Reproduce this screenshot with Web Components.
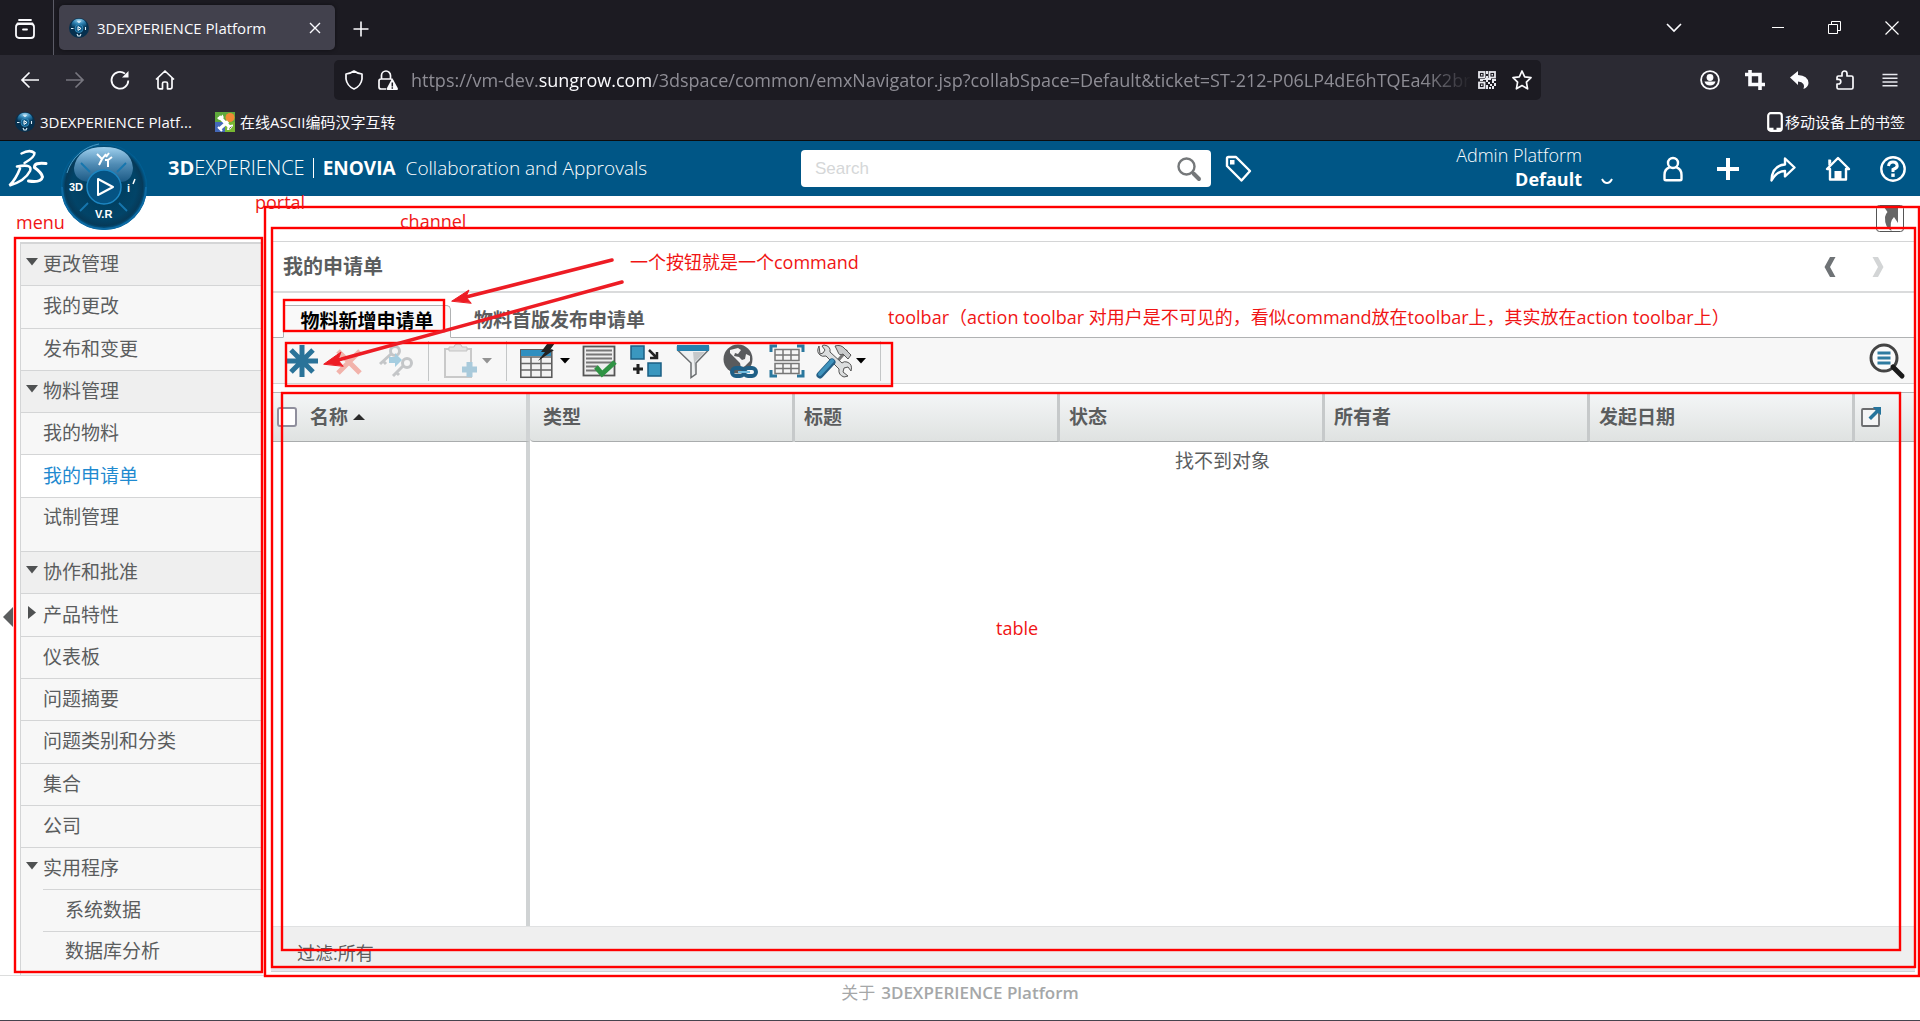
<!DOCTYPE html>
<html lang="zh-CN">
<head>
<meta charset="utf-8">
<title>3DEXPERIENCE Platform</title>
<style>
html,body{margin:0;height:100%}
body{font-family:"Open Sans","Noto Sans CJK SC",sans-serif;font-size:15px;color:#5b5d5e;background:#fff;overflow:hidden}
</style>
</head>
<body>
<app-shell></app-shell>
<script>
const define=(name,markup,setup)=>{
  customElements.define(name,class extends HTMLElement{
    constructor(){
      super();
      const t=document.createElement('template');
      t.innerHTML='<style>*{box-sizing:border-box}button{font:inherit;color:inherit;background:none;border:0;padding:0;margin:0;display:inline-flex;align-items:center;justify-content:center}a{color:inherit;text-decoration:none}</style>'+markup;
      this.attachShadow({mode:'open'}).append(t.content.cloneNode(true));
    }
    connectedCallback(){ if(setup) setup(this,this.shadowRoot); }
  });
};

const globeBall=`<defs><radialGradient id="b" cx=".5" cy=".2" r=".8"><stop offset="0" stop-color="#9fd4ee"/><stop offset=".5" stop-color="#2b7fb0"/><stop offset="1" stop-color="#0c4266"/></radialGradient></defs>
<circle cx="10" cy="10" r="10" fill="#06304e"/><path d="M2.500 6Q4 .8 10 .8T17.500 6Q18 10 14 9.500L10 7 6 9.500Q2 10 2.500 6z" fill="url(#b)"/><circle cx="10" cy="10.500" r="4" fill="#0f5a88" stroke="#3f97c6" stroke-width=".8"/><path d="M9 8.600l3 1.900-3 1.900z" fill="none" stroke="#fff"/><path d="M2 10.500h2.500M16.500 9v3M8 16l1 2h2l1-2M8.500 3l1.500 1.500L11.500 3" stroke="#dff1fb" stroke-width="1.100" fill="none"/>`;

/* name: [width, height, body] */
const ICONS={
 view:[20,20,'<g fill="none" stroke="#fbfbfe" stroke-width="1.800" stroke-linecap="round"><path d="M4 1h12M2.500 4.500h15"/><rect x="1" y="5" width="18" height="14" rx="3"/><path d="M8 10.500h4"/></g>'],
 ball:[20,20,globeBall],
 x:[12,12,'<path d="M1 1l10 10M11 1L1 11" stroke="#fbfbfe" stroke-width="1.400"/>'],
 plus:[16,16,'<path d="M8 0.500v15M.5 8h15" stroke="#fbfbfe" stroke-width="1.600"/>'],
 down:[16,10,'<path d="M1 1l7 7 7-7" fill="none" stroke="#fbfbfe" stroke-width="1.600"/>'],
 min:[12,12,'<path d="M0 5.500h12" stroke="#fff" stroke-width="1"/>'],
 restore:[13,13,'<path d="M.5 3.500h9v9h-9zM3.500 3.500v-3h9v9h-3" fill="none" stroke="#fff"/>'],
 close:[14,14,'<path d="M.5.5l13 13M13.500.5l-13 13" stroke="#fff" stroke-width="1.200"/>'],
 back:[20,18,'<path d="M19 9H2M9.500 1.500L2 9l7.500 7.500" fill="none" stroke="#fbfbfe" stroke-width="1.700"/>'],
 fwd:[20,18,'<path d="M1 9h17M10.500 1.500L18 9l-7.500 7.500" fill="none" stroke="#77767f" stroke-width="1.700"/>'],
 reload:[20,20,'<path d="M18.300 10.500A8.400 8.400 0 1 1 15 3.600" fill="none" stroke="#fbfbfe" stroke-width="1.800"/><path d="M18.500 1v6.500H12z" fill="#fbfbfe"/>'],
 house:[20,20,'<path d="M1 9.500L10 1l9 8.500M3 8v9q0 1.800 1.800 1.800H7.500V13.500Q7.500 12 9 12h2q1.500 0 1.500 1.500v5.300h2.700Q17 18.800 17 17V8" fill="none" stroke="#fbfbfe" stroke-width="1.700" stroke-linejoin="round"/>'],
 shield:[18,20,'<path d="M9 1q4 2.800 8 3v5q-1 7-8 10Q2 16 1 9V4q4-.2 8-3z" fill="none" stroke="#fbfbfe" stroke-width="1.700" stroke-linejoin="round"/>'],
 lock:[20,20,'<path d="M3.500 9V5.500a4.500 4.500 0 0 1 9 0V9M8 19H3q-2 0-2-2v-6q0-2 2-2h10q1 0 1.500.6" fill="none" stroke="#fbfbfe" stroke-width="1.700"/><path d="M13.500 9.500q.8-1 1.600 0L20 18.500q0 1.500-1 1.500H9.500q-1.200 0-.8-1.500z" fill="#fbfbfe"/><path d="M14.300 12.500v4M14.300 17.300v1.400" stroke="#1c1b22" stroke-width="1.500"/>'],
 qr:[18,18,'<g fill="none" stroke="#e8e8ee" stroke-width="1.800"><rect x="1" y="1" width="5.500" height="5.500"/><rect x="11.500" y="1" width="5.500" height="5.500"/><rect x="1" y="11.500" width="5.500" height="5.500"/></g><path d="M3 3h1.500v1.500H3zM13.500 3H15v1.500h-1.500zM3 13.500h1.500V15H3zM8 0h2v3H8zM8 5h2v2h3v2h-3v2H8V9H5v1H2V8h5V7h1zM14 8h4v2h-2v2h-2zM10 11h2v2h-2zM12 13h2v2h-2zM14 15h2v3h-2zM16 12h2v3h-2zM8 14h2v4H8zM11 16h2v2h-2z" fill="#e8e8ee"/>'],
 star:[20,20,'<path d="M10 1l2.700 5.800 6.300.9-4.600 4.500 1.200 6.600L10 15.600 4.400 18.800l1.200-6.600L1 7.700l6.300-.9z" fill="none" stroke="#fbfbfe" stroke-width="1.700" stroke-linejoin="round"/>'],
 account:[20,20,'<circle cx="10" cy="10" r="8.900" fill="none" stroke="#fbfbfe" stroke-width="1.800"/><circle cx="10" cy="7.500" r="3.400" fill="#fbfbfe"/><path d="M4.500 11.500h11q-1 4-5.500 4t-5.500-4z" fill="#fbfbfe"/>'],
 crop:[20,20,'<path d="M5 0v14.500h15M0 4.500h15V20" fill="none" stroke="#fbfbfe" stroke-width="3.600"/>'],
 undo:[19,18,'<path d="M0 6.500L8 0v4q10 .5 10.500 8-.2 4-5 6 2.500-6.500-5.500-7.500V14z" fill="#fbfbfe"/>'],
 puzzle:[18,20,'<path d="M6 5V3.500a2.500 2.500 0 0 1 5 0V6h4.500q1.500 0 1.500 1.500v10q0 1.500-1.500 1.500h-13Q1 19 1 17.500V14h1.500a2.300 2.300 0 0 0 0-4.600H1V7.500Q1 6 2.500 6H6z" fill="none" stroke="#fbfbfe" stroke-width="1.700" stroke-linejoin="round"/>'],
 lines:[16,14,'<path d="M.5 1.500h15M.5 5.200h15M.5 9h15M.5 12.700h15" stroke="#e8e8ee" stroke-width="1.400"/>'],
 tools2:[20,20,'<rect width="20" height="20" fill="#5fa83b"/><path d="M0 10h10v10H0z" fill="#4468b8"/><path d="M10 10h10v10H10z" fill="#78b832"/><circle cx="15" cy="5.500" r="4.500" fill="#f08a34"/><path d="M4 4.500l12 12M13 9.500L4.500 17" stroke="#fff" stroke-width="3.200"/><path d="M2 6q2 3 5 1.500T7.500 2.500L5.500 5 4 4.800z" fill="#fff"/><path d="M13 18q0-4 5-4.500M3 15l4 4" stroke="#fff" stroke-width="2"/>'],
 phone:[16,20,'<rect x="1.200" y="1.200" width="13.600" height="17.600" rx="2.500" fill="none" stroke="#fff" stroke-width="2.200"/><path d="M2 17h4.500M9.500 17H14" stroke="#fff" stroke-width="2.500"/>'],
 ds:[40,40,'<g fill="none" stroke="#fff" stroke-linecap="round"><path d="M13.500 4.500Q22 0 26.500 4 27 8 16.500 14" stroke-width="2.500"/><path d="M9 17.500Q25 14.500 22 22 17 32 1.500 36.500 8 30 12 19.500" stroke-width="2.600"/><path d="M38 14.500Q26 13 26.500 18.500 34 24 34.500 28 33 34 20.500 32" stroke-width="3"/></g>'],
 compass:[90,90,`<defs><radialGradient id="a" cx=".5" cy=".5" r=".5"><stop offset="0" stop-color="#003a58"/><stop offset=".75" stop-color="#024468"/><stop offset=".9" stop-color="#063a59"/><stop offset="1" stop-color="#00639a"/></radialGradient><linearGradient id="c" x1="0" y1="0" x2="0" y2="1"><stop offset="0" stop-color="#9fd0ee"/><stop offset=".5" stop-color="#4f8bb4"/><stop offset="1" stop-color="#1c5a85"/></linearGradient></defs>
 <circle cx="45" cy="45" r="43" fill="url(#a)"/><path d="M8 31A41 41 0 0 1 40 2" fill="none" stroke="#4b9ac4"/><path d="M3 45a42 42 0 0 0 84 0" fill="none" stroke="#0d6aa3" stroke-width="2"/>
 <path d="M15 26Q18 5 45 5t29 21q-1 14-13 14-6-12-16-12T29 40Q15 38 15 26z" fill="url(#c)"/>
 <path d="M22 21l9 9M67 21l-9 9M21 69l8-8M68 69l-8-8" stroke="#1676ae" stroke-width="1.800"/>
 <circle cx="45" cy="45" r="17" fill="#055383" stroke="#1d86c2" stroke-width="1.500"/><path d="M39 37l15 8-15 8z" fill="none" stroke="#fff" stroke-width="2" stroke-linejoin="round"/>
 <path d="M38 12l5 5 4-5M43 17l-3 6M46 18h4M49 18v7M53 15l-4 3M50 11l-3 4" stroke="#fff" stroke-width="2" fill="none"/>
 <g fill="#fff" font-family="Liberation Sans" font-weight="700" font-size="11"><text x="10" y="49">3D</text><text x="36" y="76">V.R</text><text x="68" y="50">i</text></g><path d="M74 42l2-5" stroke="#fff" stroke-width="1.500"/>`],
 find:[24,24,'<circle cx="9.500" cy="9.500" r="8" fill="none" stroke="#75787a" stroke-width="2.400"/><path d="M15 15l2 2" stroke="#75787a" stroke-width="2"/><path d="M16.500 16.500l5.500 5.500" stroke="#75787a" stroke-width="4" stroke-linecap="round"/>'],
 tag:[28,28,'<path d="M2 3.500Q2 2 3.500 2H11l14 14-8.500 9.500L2 11z" fill="none" stroke="#fff" stroke-width="2.400" stroke-linejoin="round"/><rect x="5" y="5" width="4.500" height="4.500" fill="#fff"/>'],
 user:[26,26,'<circle cx="13" cy="7" r="5" fill="none" stroke="#fff" stroke-width="2.400"/><path d="M9.500 11.500Q4.500 13 4.500 19v4q0 1.300 1.500 1.300h14q1.500 0 1.500-1.300v-4q0-6-5-7.500" fill="none" stroke="#fff" stroke-width="2.400"/>'],
 add:[26,26,'<path d="M13 2v22M2 13h22" stroke="#fff" stroke-width="4"/>'],
 share:[26,26,'<path d="M1.500 24.500Q2 9.500 15 8.500V2.500l9.500 9-9.500 9v-5.500Q7 15 1.500 24.500z" fill="none" stroke="#fff" stroke-width="2.400" stroke-linejoin="round"/>'],
 home:[26,26,'<path d="M13 2L2 13h3v10.500h16V13h3zM5 7V4" fill="none" stroke="#fff" stroke-width="2.400" stroke-linejoin="round"/><rect x="9.500" y="15" width="7" height="9" fill="#fff"/><path d="M4.500 3.500v6" stroke="#fff" stroke-width="2.400"/>'],
 help:[26,26,'<circle cx="13" cy="13" r="11.700" fill="none" stroke="#fff" stroke-width="2.400"/><path d="M8.500 10Q9 6 13 6t4.200 4Q17 12 13 13.500V16" fill="none" stroke="#fff" stroke-width="3"/><rect x="11.300" y="17.500" width="3.400" height="3.400" fill="#fff"/>'],
 caret:[12,7,'<path d="M1 1q2 4 5 4t5-4" fill="none" stroke="#fff" stroke-width="2"/>'],
 pin:[30,28,'<rect x="1.500" y=".5" width="27" height="26" rx="3" fill="#fff" stroke="#555"/><path d="M9 2h14v16l-4-6q-5 5-2.500 14-7-4-6.500-14 .5-3 2.500-5z" fill="#666"/>'],
 prev:[12,20,'<path d="M6 0h5.500L6 10l5.500 10H6L.5 10z" fill="#6f7376"/>'],
 next:[12,20,'<path d="M6 0H.5L6 10 .5 20H6l5.500-10z" fill="#d3d5d6"/>'],
 tri:[12,8,'<path d="M0 0h12L6 7.500z" fill="#4f5152"/>'],
 trir:[8,13,'<path d="M0 0v13l8-6.500z" fill="#4f5152"/>'],
 dd:[10,6,'<path d="M0 0h10L5 5.500z" fill="#000"/>'],
 up:[12,7,'<path d="M6 0l6 6H0z" fill="#2b2b2b"/>'],
 aster:[34,34,'<path d="M17 1v32M1 17h32M6 6l22 22M28 6L6 28" stroke="#2a7399" stroke-width="5"/>'],
 del:[34,34,'<path d="M6 7l22 22M28 7L6 29" stroke="#f2b3ab" stroke-width="5"/>'],
 keys:[34,34,'<g fill="none" stroke="#c4c6c8" stroke-width="3"><circle cx="16" cy="7" r="4.500"/><path d="M12 10L1 20M4 17l3 3"/><circle cx="28" cy="19" r="4.500"/><path d="M24 22L14 32M17 28l3 3"/></g><path d="M10 13h6V9l7 7-7 7v-4h-6z" fill="#a5cde0"/>'],
 paste:[34,34,'<path d="M2 5h26v28H2z" fill="#f4f4f4" stroke="#c9c9c9" stroke-width="2"/><path d="M6 7V3h5q0-3 4-3t4 3h5v4z" fill="#e2e2e2" stroke="#c3c3c3"/><path d="M26.500 18v15M19 25.500h15" stroke="#a9cadb" stroke-width="6"/>'],
 table:[36,34,'<rect x=".8" y="5.800" width="31" height="27.500" fill="#f2f2f2" stroke="#555" stroke-width="1.500"/><path d="M1 6h30v6H1z" fill="#2f8fc0"/><path d="M1 13h30M1 19.500h30M1 26h30M11 13v20M21 13v20" stroke="#666" stroke-width="1.500"/><path d="M27 0l8-1-5 7h4L18 17l7-9h-4z" fill="#222"/>'],
 list:[34,34,'<rect x="1.500" y="2.500" width="31" height="29" fill="#eee" stroke="#555" stroke-width="1.800"/><path d="M4 6.500h26M4 10.500h26M4 14.500h26M4 18.500h26M4 22.500h12M4 26.500h11" stroke="#777" stroke-width="2"/><path d="M14 23l6 7L33 18" fill="none" stroke="#2f9344" stroke-width="5"/>'],
 swap:[34,34,'<g fill="#3a97bf" stroke="#1b5f84" stroke-width="1.500"><rect x="2" y="2" width="13" height="13"/><rect x="19" y="19" width="13" height="13"/></g><path d="M20 6l7 7M28 8v6h-7" fill="none" stroke="#222" stroke-width="2.500"/><path d="M9 20v10M4 25h10" stroke="#222" stroke-width="3"/>'],
 funnel:[34,34,'<path d="M1.500 3h31v3L20 19v11l-5 3.500V19L1.500 6z" fill="#eef0f1" stroke="#6b6e70" stroke-width="1.500"/><path d="M1 1h32v6H1z" fill="#2480ad"/><path d="M17 8h12l-10 10v11" fill="#c5c8ca"/>'],
 globe:[36,34,'<circle cx="16" cy="15" r="14.500" fill="#595b5d"/><path d="M8 6l8-2 3 2-3 4-3-1-1 3 5 1 3 3 3-1 1-5 4 2 0 5-5 5-4 2-1-5-5-5-5-5z" fill="#f3f3f3"/><g fill="none" stroke="#1f5f86" stroke-width="4"><rect x="10" y="24" width="12" height="8" rx="4"/><rect x="22" y="24" width="12" height="8" rx="4"/></g><path d="M16 28h12" stroke="#73bde0" stroke-width="2"/>'],
 grid:[36,34,'<path d="M2 8V2h6M28 2h6v6M2 26v6h6M28 32h6v-6" fill="none" stroke="#2b789e" stroke-width="3"/><path d="M6 5.500h24v11H6zM6 11h24M14 5.500v11M22 5.500v11M6 19.500h24v10H6zM6 24.500h24M14 19.500v10M22 19.500v10" fill="#f5f5f5" stroke="#777" stroke-width="1.500"/>'],
 tools:[36,34,'<path d="M19 20L31 6" stroke="#777" stroke-width="3"/><path d="M19 2q6-2 10 3l6 6-3 4-5-5q-4 2-5-2z" fill="#c9cbcc" stroke="#555"/><path d="M3 2q-3 6 1 9 2 2 6 1l13 13q-1 6 5 8l4-1-5-4 1-4 4-1 3 4q2-7-4-9-3-1-5 1L14 8q1-6-6-7L6 2l3 4-2 3-3 1z" fill="#dcdedf" stroke="#555"/><path d="M16 18L4 31" stroke="#245f86" stroke-width="7" stroke-linecap="round"/><path d="M16 17L4 30" stroke="#3f93bd" stroke-width="4" stroke-linecap="round"/>'],
 zoomlist:[36,36,'<circle cx="15" cy="15" r="13" fill="#fbfbfb" stroke="#444" stroke-width="3"/><path d="M8.500 10h13M8.500 15h13M8.500 20h13" stroke="#2f7ba0" stroke-width="3"/><path d="M24 24l9 9" stroke="#1a1a1a" stroke-width="5" stroke-linecap="round"/>'],
 open:[20,20,'<rect x="1" y="2" width="17" height="17" rx="1" fill="#f4f5f5" stroke="#6a6c6e" stroke-width="1.800"/><path d="M12 0h8v8l-3-2-7 7-2.500-2.500 7-7z" fill="#25749c"/>']
};
class UiIcon extends HTMLElement{
  connectedCallback(){
    const [w,h,body]=ICONS[this.getAttribute('name')];
    const root=this.shadowRoot||this.attachShadow({mode:'open'});
    root.innerHTML=`<style>:host{display:block;flex:none}svg{display:block;overflow:visible}</style><svg width="${w}" height="${h}" viewBox="0 0 ${w} ${h}" aria-hidden="true">${body}</svg>`;
  }
}
customElements.define('ui-icon',UiIcon);

define('browser-tabs',`<style>
:host{display:flex;height:55px;background:#1c1b22;color:#fbfbfe;align-items:stretch}
.view{width:54px;padding-right:4px;padding-top:2px;border-right:1px solid #5b5b66}
.tab{display:flex;align-items:center;gap:8px;width:276px;height:45px;margin:5px 0 0 5px;padding:0 14px 0 10px;background:#42414d;border-radius:5px;box-shadow:0 0 4px #0007;line-height:20px}
.tab span{flex:1;white-space:nowrap}
.new{width:52px;padding-top:3px}
.win{margin-left:auto;display:flex}
.win button{width:57px}
.win .all{width:56px;margin-right:47px}
</style><button class="view" aria-label="Firefox View"><ui-icon name="view"></ui-icon></button>
<div class="tab"><ui-icon name="ball"></ui-icon><span><slot></slot></span><button aria-label="关闭标签页"><ui-icon name="x"></ui-icon></button></div>
<button class="new" aria-label="新建标签页"><ui-icon name="plus"></ui-icon></button>
<div class="win"><button class="all" aria-label="列出所有标签页"><ui-icon name="down"></ui-icon></button><button aria-label="最小化"><ui-icon name="min"></ui-icon></button><button aria-label="还原"><ui-icon name="restore"></ui-icon></button><button aria-label="关闭"><ui-icon name="close"></ui-icon></button></div>`);

define('browser-toolbar',`<style>
:host{display:flex;align-items:center;height:50px;background:#2b2a33;color:#fbfbfe}
button{width:45px;height:40px}
.nav{display:flex;width:327px;padding-left:7px;box-sizing:content-box}
.url{flex:1;min-width:0;display:flex;align-items:center;height:40px;background:#1c1b22;border-radius:5px;padding:0 9px 0 10px;font-size:18px;line-height:26px}
.url .shield{width:20px;margin-right:10px}
.url .lock{width:28px;margin-right:9px}
.url .qr{width:30px;margin-right:10px}
.url .s{width:20px}
.addr{flex:1;min-width:0;overflow:hidden;white-space:nowrap;color:#8e8d95;-webkit-mask-image:linear-gradient(90deg,#000 calc(100% - 50px),#0000)}
b{font-weight:400;color:#fbfbfe}
.act{display:flex;padding:0 8px 0 146px}
</style><div class="nav"><button aria-label="后退"><ui-icon name="back"></ui-icon></button><button aria-label="前进"><ui-icon name="fwd"></ui-icon></button><button aria-label="刷新"><ui-icon name="reload"></ui-icon></button><button aria-label="主页"><ui-icon name="house"></ui-icon></button></div>
<div class="url"><button class="shield" aria-label="跟踪保护"><ui-icon name="shield"></ui-icon></button><button class="lock" aria-label="连接"><ui-icon name="lock"></ui-icon></button><div class="addr" role="textbox" aria-label="地址">https://vm-dev.<b>sungrow.com</b>/3dspace/common/emxNavigator.jsp?collabSpace=Default&amp;ticket=ST-212-P06LP4dE6hTQEa4K2brI</div><button class="qr" aria-label="二维码"><ui-icon name="qr"></ui-icon></button><button class="s" aria-label="收藏"><ui-icon name="star"></ui-icon></button></div>
<div class="act"><button aria-label="账户"><ui-icon name="account"></ui-icon></button><button aria-label="截图"><ui-icon name="crop"></ui-icon></button><button aria-label="撤销"><ui-icon name="undo"></ui-icon></button><button aria-label="扩展"><ui-icon name="puzzle"></ui-icon></button><button aria-label="菜单"><ui-icon name="lines"></ui-icon></button></div>`);

define('bookmark-bar',`<style>
:host{display:flex;align-items:center;height:36px;padding:0 15px 1px 15px;background:#2b2a33;color:#fbfbfe;border-bottom:1px solid #0c0c0d;line-height:20px}
a{display:flex;align-items:center;gap:5px;margin-right:23px;white-space:nowrap}
a:last-child{margin:0 0 0 auto;gap:2px}
</style><a href="#"><ui-icon name="ball"></ui-icon>3DEXPERIENCE Platf...</a><a href="#"><ui-icon name="tools2"></ui-icon>在线ASCII编码汉字互转</a><a href="#"><ui-icon name="phone"></ui-icon>移动设备上的书签</a>`);

define('app-header',`<style>
:host{position:relative;display:grid;grid-template-columns:801fr 452fr 667fr;align-items:center;height:55px;background:#005686;color:#fff;font-size:18px;line-height:24px}
.brand{display:flex;align-items:center;padding-left:8px;white-space:nowrap;font-size:19px}
.compass{position:absolute;left:59px;top:1px;z-index:2}
.name{margin-left:120px;font-weight:300;font-size:20px}
.name b{font-weight:700}
.prod{margin-left:8px;padding-left:9px;border-left:1px solid #fff;line-height:20px;font-weight:700}
.sub{margin-left:10px;font-weight:300}
.brand span{margin-bottom:2px}
form{display:flex;align-items:center;gap:14px;margin:0}
.box{flex:1;display:flex;align-items:center;height:37px;background:#fff;border-radius:4px;padding:0 10px 0 14px}
input{flex:1;min-width:0;border:0;outline:0;padding:0;background:none;font:17px "Liberation Sans",sans-serif;color:#333}
input::placeholder{color:#d5d7d8;opacity:1}
.right{display:flex;align-items:center;justify-content:flex-end}
.who{display:flex;flex-direction:column;align-items:flex-end;font-weight:300;line-height:24px;padding-bottom:4px}
.who b{font-weight:700}
.ctx{width:56px;height:20px;padding-right:8px;margin:0 7px 3px 0;align-self:flex-end;justify-content:flex-end;padding-right:25px}
.i{width:55px}
</style>
<div class="brand"><ui-icon name="ds"></ui-icon><span class="name"><b>3D</b>EXPERIENCE</span><span class="prod">ENOVIA</span><span class="sub">Collaboration and Approvals</span></div>
<button class="compass" aria-label="Compass"><ui-icon name="compass"></ui-icon></button>
<form><div class="box"><input type="search" aria-label="Search" placeholder="Search"><button type="button" aria-label="Go"><ui-icon name="find"></ui-icon></button></div><button type="button" aria-label="Tags"><ui-icon name="tag"></ui-icon></button></form>
<div class="right"><div class="who"><span>Admin Platform</span><b>Default</b></div><button class="ctx" aria-label="Context"><ui-icon name="caret"></ui-icon></button><button class="i" aria-label="Profile"><ui-icon name="user"></ui-icon></button><button class="i" aria-label="Add"><ui-icon name="add"></ui-icon></button><button class="i" aria-label="Share"><ui-icon name="share"></ui-icon></button><button class="i" aria-label="Home"><ui-icon name="home"></ui-icon></button><button class="i" aria-label="Help"><ui-icon name="help"></ui-icon></button></div>`);

define('menu-item',`<style>
:host{display:flex;flex:1;min-height:0;border-top:1px solid #d4d5d6;background:#f7f7f7}
:host([group]){background:#efefef}
:host([current]){background:#fff;color:#1f8ad0}
:host([last]){flex:1 1 13px}
:host([sub]){border-top:0}
a{flex:1;display:flex;align-items:center;padding-bottom:1px}
:host([last]) a{padding-bottom:14px}
.m{width:22px;display:flex;justify-content:center;padding-bottom:4px}
:host([sub]) a{margin-left:22px;padding-left:22px;border-top:1px solid #d4d5d6}
:host([sub]) .m{display:none}
</style><a href="#"><span class="m"></span><slot></slot></a>`,(el,r)=>{
  const o=el.getAttribute('open');
  if(o) r.querySelector('.m').innerHTML=`<ui-icon name="${o==='yes'?'tri':'trir'}"></ui-icon>`;
});

define('side-menu',`<style>
:host{display:flex;width:242px;flex:none;margin:46px 0 0 20px;font-size:19px;line-height:26px}
nav{flex:1;display:flex;flex-direction:column;padding-bottom:3px;background:#f7f7f7;border-left:1px solid #d4d5d6;border-top:1px solid #d4d5d6}
</style><nav><slot></slot></nav>`);

define('tool-bar',`<style>
:host{display:flex;align-items:center;height:46px;padding:0 10px 0 7px;background:#f7f7f7;border-bottom:1px solid #d2d3d4}
.t{width:47px;height:40px}.d{width:20px;height:24px;margin-left:-6px;position:relative}
.sep{width:1px;height:40px;background:#c4c6c7;margin:0 7px 0 9px}
.off{opacity:.4}
.find{margin-left:auto}
</style>
<button class="t" aria-label="新建"><ui-icon name="aster"></ui-icon></button><button class="t" aria-label="删除"><ui-icon name="del"></ui-icon></button><button class="t" aria-label="所有权"><ui-icon name="keys"></ui-icon></button><span class="sep"></span>
<button class="t" aria-label="粘贴"><ui-icon name="paste"></ui-icon></button><button class="d off" aria-label="粘贴选项"><ui-icon name="dd"></ui-icon></button><span class="sep"></span>
<button class="t" aria-label="表视图"><ui-icon name="table"></ui-icon></button><button class="d" aria-label="视图选项"><ui-icon name="dd"></ui-icon></button>
<button class="t" aria-label="全选"><ui-icon name="list"></ui-icon></button><button class="t" aria-label="比较"><ui-icon name="swap"></ui-icon></button><button class="t" aria-label="过滤"><ui-icon name="funnel"></ui-icon></button><button class="t" aria-label="链接"><ui-icon name="globe"></ui-icon></button><button class="t" aria-label="分组"><ui-icon name="grid"></ui-icon></button><button class="t" aria-label="工具"><ui-icon name="tools"></ui-icon></button><button class="d" aria-label="工具选项"><ui-icon name="dd"></ui-icon></button><span class="sep"></span>
<button class="find" aria-label="查找"><ui-icon name="zoomlist"></ui-icon></button>`);

define('data-table',`<style>
:host{display:flex;flex-direction:column;flex:1;min-height:0;margin-top:8px;font-size:19px;line-height:26px}
table{flex:1;width:100%;border-collapse:separate;border-spacing:0;table-layout:fixed}
thead tr{height:50px}
th{height:50px;padding:0 0 0 9px;text-align:left;font-weight:700;background:linear-gradient(#f4f6f7,#dfe2e1);border-top:1px solid #b3b5b6;border-bottom:1px solid #a9acad;border-right:3px solid #c6c9ca}
th:first-child{width:259px;padding-left:6px;border-right:4px solid #d0d3d4}
th:nth-child(2){padding-left:13px;border-bottom-left-radius:4px}
th:last-child{width:60px;padding:0 0 0 6px;border-right:0}
.h{display:flex;align-items:center;gap:5px}
th button{display:flex}
input{appearance:none;width:20px;height:20px;margin:0 8px 0 0;border:2px solid #8f8f9d;border-radius:3px;background:#fff}
tbody td{vertical-align:top;text-align:center;padding:6px 0 0}
tbody td:first-child{border-right:4px solid #d0d3d4}
</style><table><thead><tr><th><div class="h"><input type="checkbox" aria-label="全选">名称<ui-icon name="up"></ui-icon></div></th><th>类型</th><th>标题</th><th>状态</th><th>所有者</th><th>发起日期</th><th><button aria-label="打开"><ui-icon name="open"></ui-icon></button></th></tr></thead>
<tbody><tr><td></td><td colspan="6">找不到对象</td></tr></tbody></table>`);

define('work-panel',`<style>
:host{flex:1;min-width:0;display:flex;flex-direction:column;margin:0 5px 3px 9px}
.pin{height:45px;display:flex;justify-content:flex-end;align-items:flex-start;padding:9px 10px 0 0}
.title{display:flex;align-items:center;height:52px;padding:1px 27px 0 12px;border-top:1px solid #d4d5d6;border-bottom:2px solid #dadbdc}
h1{margin:0;font-size:20px;line-height:28px;font-weight:700;flex:1}
.title button{width:20px;margin-left:28px}
.tabs{display:flex;align-items:flex-end;height:45px;font-size:19px;line-height:26px;font-weight:700;border-bottom:1px solid #b0b2b3;padding-left:12px}
.tabs button{height:33px;padding:0 16px 2px;margin-left:7px;font-weight:700}
.tabs .on{width:168px;margin:0 0 -1px;background:#f9f9f9;color:#000;border:1px solid #b0b2b3;border-bottom-color:#f7f7f7;border-radius:0 5px 0 0}
.status{height:41px;flex:none;padding:12px 0 0 26px;background:#efefef;border-top:1px solid #e0e1e2;font-size:18px;line-height:28px}
.edge{height:5px;flex:none;background:#e5e6ee;border-bottom:1px solid #d0d1d4}
</style><div class="pin"><button aria-label="固定"><ui-icon name="pin"></ui-icon></button></div>
<div class="title"><h1>我的申请单</h1><button aria-label="上一个"><ui-icon name="prev"></ui-icon></button><button aria-label="下一个"><ui-icon name="next"></ui-icon></button></div>
<div class="tabs" role="tablist"><button class="on" role="tab" aria-selected="true">物料新增申请单</button><button role="tab">物料首版发布申请单</button></div>
<slot></slot><div class="status">过滤:所有</div><div class="edge"></div>`);

define('page-footer',`<style>
:host{display:flex;justify-content:center;height:46px;flex:none;padding-top:4px;border-top:1px solid #dcdddd;border-bottom:1px solid #45444e;color:#a5a7a8;font-size:17px;line-height:26px}
b{font-weight:600;margin-left:6px}
</style>关于 <b>3DEXPERIENCE Platform</b>`);

/* Markup drawn over the page: boxes, arrows and notes on the free canvas */
define('annotation-layer',`<style>
:host{position:absolute;inset:0;pointer-events:none;z-index:5}
svg{display:block;width:100%;height:100%}
text{fill:#f01414;font-size:18px}
</style><svg>
<g fill="none" stroke="#f00" stroke-width="2.400"><rect x="15" y="238" width="247" height="734"/><rect x="265" y="207" width="1654" height="769"/><rect x="272" y="228" width="1643" height="739"/><rect x="282" y="393" width="1618" height="557"/><rect x="284" y="300" width="160" height="31"/><rect x="286" y="343" width="606" height="43"/></g>
<g stroke="#ed1c24" stroke-width="3.500" stroke-linecap="round" fill="#ed1c24"><path d="M612 260L466 297M622 282L338 360"/><path d="M452 301l17-11-3 7 5 6zM324 364l17-12-3 8 5 6z" stroke-width="1"/></g>
<text x="16" y="229">menu</text><text x="255" y="209">portal</text><text x="400" y="228">channel</text><text x="996" y="635">table</text>
<text x="630" y="269">一个按钮就是一个command</text>
<text x="888" y="324">toolbar（action toolbar 对用户是不可见的，看似command放在toolbar上，其实放在action toolbar上）</text>
</svg>`);

define('app-shell',`<style>
:host{position:relative;display:flex;flex-direction:column;height:100vh;min-height:900px}
main{flex:1;min-height:0;display:flex;position:relative}
.fold{position:absolute;left:3px;top:411px}
.fold i{display:block;border:10px solid #0000;border-left:0;border-right-color:#5b5d5e}
</style>
<browser-tabs>3DEXPERIENCE Platform</browser-tabs><browser-toolbar></browser-toolbar><bookmark-bar></bookmark-bar><app-header></app-header>
<main><button class="fold" aria-label="折叠"><i></i></button>
<side-menu><menu-item group open="yes">更改管理</menu-item><menu-item>我的更改</menu-item><menu-item>发布和变更</menu-item><menu-item group open="yes">物料管理</menu-item><menu-item>我的物料</menu-item><menu-item current>我的申请单</menu-item><menu-item last>试制管理</menu-item><menu-item group open="yes">协作和批准</menu-item><menu-item open="no">产品特性</menu-item><menu-item>仪表板</menu-item><menu-item>问题摘要</menu-item><menu-item>问题类别和分类</menu-item><menu-item>集合</menu-item><menu-item>公司</menu-item><menu-item open="yes">实用程序</menu-item><menu-item sub>系统数据</menu-item><menu-item sub>数据库分析</menu-item></side-menu>
<work-panel><tool-bar></tool-bar><data-table></data-table></work-panel></main>
<page-footer></page-footer><annotation-layer></annotation-layer>`);
</script>
</body>
</html>
